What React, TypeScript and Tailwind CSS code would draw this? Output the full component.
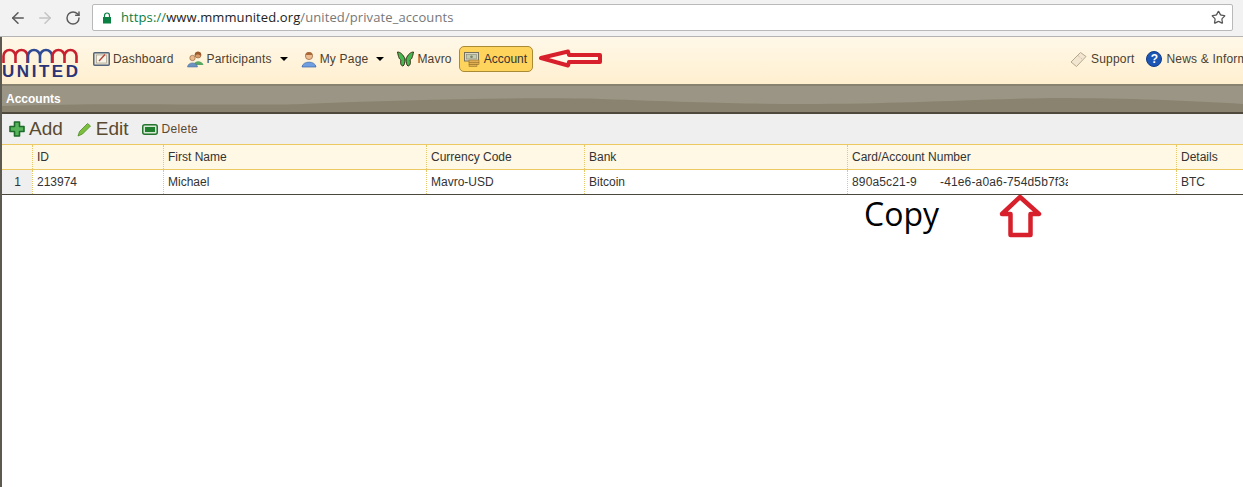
import { ArrowLeft, ArrowRight, RotateCw, Star } from "lucide-react";
import type { ReactNode } from "react";

const LogoArc = ({ x, color }: { x: number; color: string }) => (
  <path d={`M${x} 15 V8 a6 6 0 0 1 12 0 V15 M${x + 12} 8 a6 6 0 0 1 12 0 V15`} fill="none" stroke={color} strokeWidth="2.6" />
);

const Logo = () => (
  <div className="relative w-[80px] h-[34px] shrink-0 mt-[11px]">
    <svg width="78" height="17" viewBox="0 0 78 17" className="block">
      <LogoArc x={1.5} color="#c8202f" />
      <LogoArc x={26} color="#2f4a95" />
      <LogoArc x={50.5} color="#c8202f" />
    </svg>
    <div className="absolute left-0 top-[14px] w-[76px] flex justify-between text-[17px] leading-[20px] font-bold text-[#2b3478] font-['Liberation_Sans',sans-serif]">
      <span>U</span><span>N</span><span>I</span><span>T</span><span>E</span><span>D</span>
    </div>
  </div>
);

const DashIcon = () => (
  <svg width="17" height="16" viewBox="0 0 17 16">
    <rect x="0.75" y="1.75" width="15.5" height="12.5" rx="1" fill="#e8e2d2" stroke="#55657a" strokeWidth="1.5" />
    <rect x="3.5" y="4" width="10" height="8" fill="#f7f4ea" stroke="#a9a08a" strokeWidth="0.7" />
    <path d="M6 10 L12 3.5" stroke="#b8443a" strokeWidth="1.4" />
  </svg>
);

const PeopleIcon = () => (
  <svg width="17" height="17" viewBox="0 0 17 17">
    <circle cx="11" cy="4" r="3" fill="#d99a6c" stroke="#8a5a30" strokeWidth="0.6" />
    <path d="M11 0.7 C8 0.7 7.5 3 8 5 C9 3 12 3 14 5 C14.5 3 14 0.7 11 0.7 Z" fill="#9a5a2c" />
    <path d="M7 14 C7 9 15 9 16.5 14 Z" fill="#5aa864" />
    <circle cx="5.5" cy="7" r="2.7" fill="#eab98e" stroke="#8a5a30" strokeWidth="0.6" />
    <path d="M0.5 16 C1 10.5 10 10.5 10.5 16 Z" fill="#6c93c4" stroke="#3e5f8c" strokeWidth="0.5" />
  </svg>
);

const UserIcon = () => (
  <svg width="16" height="17" viewBox="0 0 16 17">
    <circle cx="8" cy="5" r="3.6" fill="#efbc92" stroke="#94623a" strokeWidth="0.7" />
    <path d="M4.5 4 C4.5 0 11.5 0 11.5 4 Z" fill="#a96a3a" />
    <path d="M1 16 C1.5 9.5 14.5 9.5 15 16 Z" fill="#6f9fe0" stroke="#3b64a8" strokeWidth="0.7" />
  </svg>
);

const ButterflyIcon = () => (
  <svg width="17" height="16" viewBox="0 0 17 16">
    <path d="M8 8 C6 3 3 1 0.5 1 C1.5 6 2 8 4 9 C3 12 4 15 6 15 C7.5 14 8 11 8 8 Z" fill="#47b84f" stroke="#3a2c18" strokeWidth="1" />
    <path d="M9 8 C11 3 14 1 16.5 1 C15.5 6 15 8 13 9 C14 12 13 15 11 15 C9.5 14 9 11 9 8 Z" fill="#47b84f" stroke="#3a2c18" strokeWidth="1" />
  </svg>
);

const AccountIcon = () => (
  <svg width="16" height="16" viewBox="0 0 16 16">
    <rect x="0.5" y="1.5" width="14" height="8.5" fill="#ddd6c2" stroke="#76705f" />
    <rect x="2.5" y="3.5" width="10" height="4.5" fill="#c3ccb0" stroke="#8b8776" strokeWidth="0.6" />
    <circle cx="7.5" cy="5.7" r="1.3" fill="#7a7f66" />
    <rect x="5" y="9" width="10" height="2.3" fill="#e0ae52" stroke="#8c6a26" strokeWidth="0.5" />
    <rect x="5" y="11.3" width="10" height="2.3" fill="#e0ae52" stroke="#8c6a26" strokeWidth="0.5" />
    <rect x="5" y="13.6" width="8" height="2" fill="#e0ae52" stroke="#8c6a26" strokeWidth="0.5" />
  </svg>
);

const TicketIcon = () => (
  <svg width="18" height="17" viewBox="0 0 18 17">
    <path d="M1 11 L10.5 1.5 L16 5.5 L6.5 15.5 Z" fill="#f3e6d0" stroke="#b7a78e" />
    <path d="M8 4.5 L12.5 8.5" stroke="#c2b39b" strokeDasharray="1 1" />
  </svg>
);

const HelpIcon = () => (
  <div className="w-4 h-4 mr-[1px] rounded-full bg-[#1d55b5] border border-[#123c88] text-white text-[12px] leading-[14px] font-bold text-center font-['Liberation_Sans',sans-serif]">
    ?
  </div>
);

const PlusIcon = () => (
  <svg width="16" height="16" viewBox="0 0 16 16">
    <path d="M5.5 1 H10.5 V5.5 H15 V10.5 H10.5 V15 H5.5 V10.5 H1 V5.5 H5.5 Z" fill="#57b45a" stroke="#1d6a2a" strokeWidth="1.6" strokeLinejoin="round" />
  </svg>
);

const PencilIcon = () => (
  <svg width="15" height="15" viewBox="0 0 15 15">
    <path d="M1 14 L2.5 9.5 L10.5 1.5 L13.5 4 L5.5 12 Z" fill="#7cbf3f" stroke="#4d8a22" strokeWidth="0.8" />
  </svg>
);

const MinusIcon = () => (
  <svg width="16" height="11" viewBox="0 0 16 11">
    <rect x="0.75" y="0.75" width="14.5" height="9.5" rx="2" fill="#d6e9d4" stroke="#26752f" strokeWidth="1.5" />
    <rect x="3" y="3" width="10" height="5" fill="#1f7f2d" />
  </svg>
);

const NavItem = ({ icon, label, caret }: { icon: ReactNode; label: string; caret?: boolean }) => (
  <div className="flex items-center shrink-0 gap-[3px]">
    {icon}
    <span className="whitespace-nowrap tracking-[0.2px]">{label}</span>
    {caret && <span className="ml-[5px] w-0 h-0 border-x-[4px] border-x-transparent border-t-[4px] border-t-black" />}
  </div>
);

const Cell = ({ w, children, first }: { w: string; children: ReactNode; first?: boolean }) => (
  <div className={`${w} shrink-0 pl-1 h-full flex items-center whitespace-nowrap overflow-hidden ${first ? "" : "border-l border-dotted border-[#e8c96a]"}`}>
    {children}
  </div>
);

const columns = ["w-[131px]", "w-[263px]", "w-[158px]", "w-[263px]", "w-[329px]", "w-[67px]"];

export default function App() {
  return (
    <div className="relative w-[1243px] h-[487px] overflow-hidden bg-white font-['Liberation_Sans',sans-serif] text-[12px] text-[#333]">
      {/* browser chrome */}
      <div className="h-[37px] bg-[#f2f2f2] border-b border-[#b4b4b4] flex items-center pb-[1px]">
        <ArrowLeft size={18} strokeWidth={2} className="ml-[9px] text-[#5a5a5a]" />
        <ArrowRight size={18} strokeWidth={2} className="ml-[9px] text-[#c4c4c4]" />
        <RotateCw size={16} strokeWidth={2.2} className="ml-[11px] text-[#5a5a5a]" />
        <div className="ml-[11px] h-[27px] w-[1141px] bg-white border border-[#b9b9b9] rounded-[2px] flex items-center font-['Open_Sans',sans-serif] text-[13px] tracking-[0.1px]">
          <svg width="10" height="12" viewBox="0 0 10 12" className="ml-[9px]">
            <path d="M2.5 5 V3.5 a2.5 2.5 0 0 1 5 0 V5" fill="none" stroke="#0b8043" strokeWidth="1.2" />
            <rect x="1" y="5" width="8" height="6.5" fill="#0b8043" />
          </svg>
          <span className="ml-[9px] text-[#0b8043]">https://</span>
          <span className="text-[#222]">www.mmmunited.org</span>
          <span className="text-[#777]">/united/private_accounts</span>
          <Star size={15} strokeWidth={2} className="ml-auto mr-[6px] text-[#555]" />
        </div>
      </div>

      <div className="border-l-2 border-[#5c5a50] h-[450px]">
        {/* site nav */}
        <div className="h-[47px] bg-gradient-to-b from-[#fff8e8] to-[#ffefcf] flex text-[#4a4030]">
          <Logo />
          <div className="flex items-center gap-[13px] ml-[11px] pb-[3px]">
            <NavItem icon={<DashIcon />} label="Dashboard" />
            <NavItem icon={<PeopleIcon />} label="Participants" caret />
            <NavItem icon={<UserIcon />} label="My Page" caret />
            <NavItem icon={<ButterflyIcon />} label="Mavro" />
            <div className="-ml-[6px] h-[26px] w-[74px] rounded-[5px] border border-[#a98a35] bg-[#ffd45c] flex items-center pl-[4px] gap-[4px] text-[#333]">
              <AccountIcon />
              <span>Account</span>
            </div>
          </div>
          <div className="ml-auto flex items-center gap-[12px] pb-[3px] w-[173px] shrink-0">
            <NavItem icon={<TicketIcon />} label="Support" />
            <NavItem icon={<HelpIcon />} label="News & Information" />
          </div>
        </div>

        {/* title bar */}
        <div className="relative h-[30px] bg-[#9b9585] border-t-[2px] border-t-[#8a8270] border-b-[2px] border-b-[#4f483c] flex items-center pl-1 text-white font-bold">
          <svg width="1243" height="14" viewBox="0 0 1243 14" preserveAspectRatio="none" className="absolute left-0 bottom-0">
            <path d="M0 8 C100 4 250 8 300 6 C400 2 520 -1 600 1 C680 4 740 6 800 6 C900 6 950 2 1050 0 C1130 0 1190 3 1243 6 V14 H0 Z" fill="#89836f" />
          </svg>
          <span className="relative">Accounts</span>
        </div>

        {/* toolbar */}
        <div className="h-[30px] bg-[#efefef] flex items-center pl-[7px] text-[#5a4a30]">
          <div className="flex items-center gap-[4px]"><PlusIcon /><span className="text-[19px]">Add</span></div>
          <div className="flex items-center gap-[4px] ml-[14px]"><PencilIcon /><span className="text-[19px]">Edit</span></div>
          <div className="flex items-center gap-[4px] ml-[13px]"><MinusIcon /><span className="tracking-[0.3px]">Delete</span></div>
        </div>

        {/* table */}
        <div className="border-t border-[#edc964] h-[26px] bg-[#fff8e4] flex items-center border-b text-[#333]">
          <Cell w="w-[30px]" first>{""}</Cell>
          {["ID", "First Name", "Currency Code", "Bank", "Card/Account Number", "Details"].map((h, i) => (
            <Cell key={h} w={columns[i]}>{h}</Cell>
          ))}
        </div>
        <div className="h-[25px] flex items-center border-b border-[#4c483e] text-[#333]">
          <div className="w-[30px] shrink-0 h-full bg-[#efefef] flex items-center justify-center pl-[1px]">1</div>
          <Cell w={columns[0]}>213974</Cell>
          <Cell w={columns[1]}>Michael</Cell>
          <Cell w={columns[2]}>Mavro-USD</Cell>
          <Cell w={columns[3]}>Bitcoin</Cell>
          <Cell w={columns[4]}>
            <span className="w-[65px] overflow-hidden tracking-[0.15px]">890a5c21-9</span>
            <span className="ml-[23px] w-[128px] overflow-hidden tracking-[0.15px]">-41e6-a0a6-754d5b7f3a</span>
          </Cell>
          <Cell w={columns[5]}>BTC</Cell>
        </div>
      </div>

      {/* red annotations pasted on top */}
      <svg width="64" height="20" viewBox="0 0 64 20" className="absolute left-[539px] top-[49px]">
        <path d="M2 9 L29 2.5 L30 6 L61 6 L61 13 L30 13 L29 16.5 Z" fill="#fff8e8" stroke="#d8202c" strokeWidth="4" strokeLinejoin="round" />
      </svg>
      <svg width="46" height="48" viewBox="0 0 46 48" className="absolute left-[998px] top-[192px]">
        <path d="M22 5 L41 22 L32.5 22 L32.5 43 L12.5 43 L12.5 22 L4 22 Z" fill="white" stroke="#d8202c" strokeWidth="4.5" strokeLinejoin="round" />
      </svg>
      <div className="absolute left-[864px] top-[194px] text-[32px] leading-[40px] text-black font-['Open_Sans',sans-serif]">Copy</div>
    </div>
  );
}
